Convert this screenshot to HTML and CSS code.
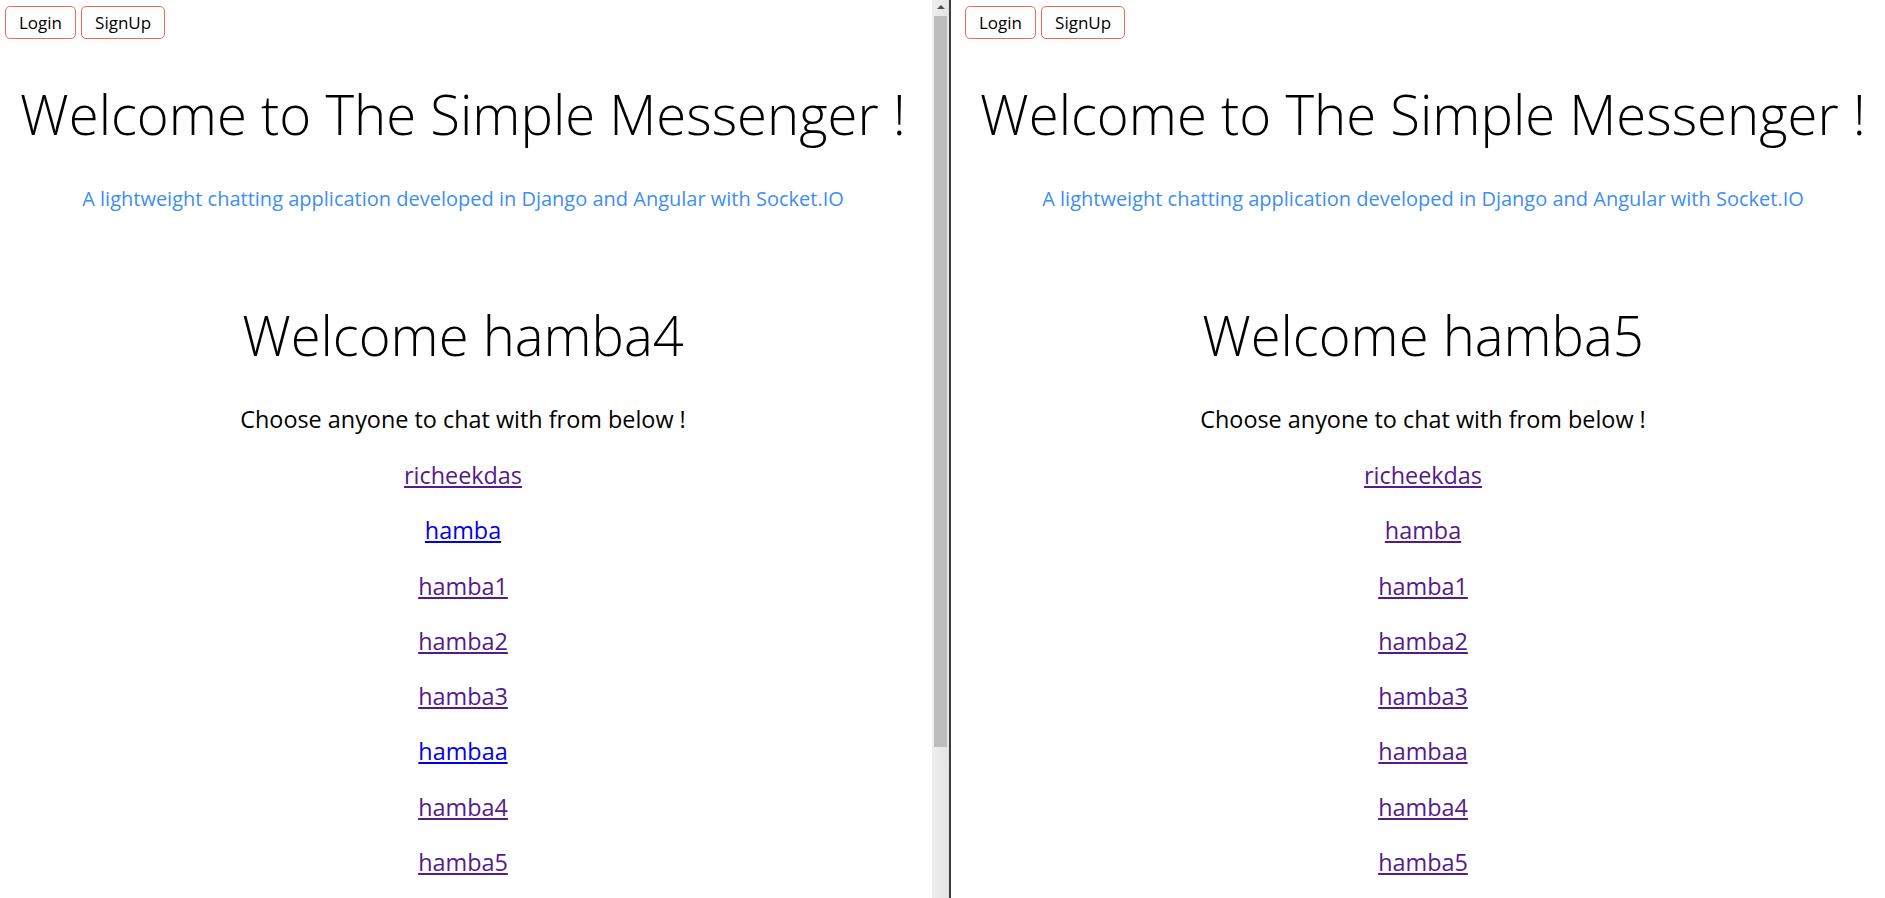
FILE: index.html
```html
<!DOCTYPE html>
<html>
<head>
<meta charset="utf-8">
<title>The Simple Messenger</title>
<link rel="stylesheet" href="styles.css">
</head>
<body>
<div class="screen">
  <div class="window window-left">
    <div class="toolbar">
      <button class="btn">Login</button>
      <button class="btn">SignUp</button>
    </div>
    <header class="hero">
      <h1 class="title">Welcome to The Simple Messenger !</h1>
      <p class="subtitle">A lightweight chatting application developed in Django and Angular with Socket.IO</p>
    </header>
    <main class="home">
      <h2 class="welcome">Welcome hamba4</h2>
      <p class="choose">Choose anyone to chat with from below !</p>
      <ul class="users">
        <li><a class="user visited" href="#">richeekdas</a></li>
        <li><a class="user fresh" href="#">hamba</a></li>
        <li><a class="user visited" href="#">hamba1</a></li>
        <li><a class="user visited" href="#">hamba2</a></li>
        <li><a class="user visited" href="#">hamba3</a></li>
        <li><a class="user fresh" href="#">hambaa</a></li>
        <li><a class="user visited" href="#">hamba4</a></li>
        <li><a class="user visited" href="#">hamba5</a></li>
      </ul>
    </main>
  </div>
  <div class="scrollbar">
    <div class="scroll-arrow"></div>
    <div class="scroll-thumb"></div>
  </div>
  <div class="divider"></div>
  <div class="frame-gap"></div>
  <div class="window window-right">
    <div class="toolbar">
      <button class="btn">Login</button>
      <button class="btn">SignUp</button>
    </div>
    <header class="hero">
      <h1 class="title">Welcome to The Simple Messenger !</h1>
      <p class="subtitle">A lightweight chatting application developed in Django and Angular with Socket.IO</p>
    </header>
    <main class="home">
      <h2 class="welcome">Welcome hamba5</h2>
      <p class="choose">Choose anyone to chat with from below !</p>
      <ul class="users">
        <li><a class="user visited" href="#">richeekdas</a></li>
        <li><a class="user visited" href="#">hamba</a></li>
        <li><a class="user visited" href="#">hamba1</a></li>
        <li><a class="user visited" href="#">hamba2</a></li>
        <li><a class="user visited" href="#">hamba3</a></li>
        <li><a class="user visited" href="#">hambaa</a></li>
        <li><a class="user visited" href="#">hamba4</a></li>
        <li><a class="user visited" href="#">hamba5</a></li>
      </ul>
    </main>
  </div>
</div>
</body>
</html>
```

FILE: styles.css
```css
html, body {
  margin: 0;
  padding: 0;
  background: #ffffff;
}

body {
  width: 1885px;
  height: 898px;
  overflow: hidden;
  font-family: "Open Sans", "Liberation Sans", sans-serif;
  color: #000;
}

.screen {
  display: flex;
  width: 1885px;
  height: 898px;
  overflow: hidden;
}

.window {
  flex: 0 0 932px;
  width: 932px;
  height: 898px;
  overflow: hidden;
  background: #fff;
}

.toolbar {
  display: flex;
  gap: 5px;
  padding: 6px 0 0 5px;
}

.btn {
  height: 33px;
  padding: 0 13px;
  border: 1px solid #f2694e;
  border-radius: 5px;
  background: #fff;
  color: #000;
  font-family: "Open Sans", "Liberation Sans", sans-serif;
  font-size: 17px;
  line-height: 31px;
}

.hero {
  text-align: center;
  padding-right: 6px;
}

.title {
  margin: 42px 0 0;
  font-size: 54.5px;
  font-weight: 300;
  line-height: 67px;
  color: #000;
}

.subtitle {
  margin: 36px 0 0;
  font-size: 20px;
  line-height: 30px;
  color: #3d8ef5;
}

.home {
  text-align: center;
  padding-right: 6px;
}

.welcome {
  margin: 88px 0 0;
  font-size: 54.4px;
  font-weight: 300;
  line-height: 67px;
}

.choose {
  margin: 33px 0 0;
  font-size: 23.4px;
  line-height: 35px;
}

.users {
  list-style: none;
  margin: 21px 0 0;
  padding: 0;
  display: flex;
  flex-direction: column;
  align-items: center;
  gap: 20.3px;
}

.users li {
  font-size: 23.4px;
  line-height: 35px;
}

.user {
  text-decoration: underline;
}

.user.visited {
  color: #551a8b;
}

.user.fresh {
  color: #0000ee;
}

.scrollbar {
  flex: 0 0 17px;
  height: 898px;
  background: linear-gradient(to right, #eeeeee, #e4e4e4);
  display: flex;
  flex-direction: column;
  align-items: center;
}

.scroll-arrow {
  width: 0;
  height: 0;
  margin-top: 5px;
  border-left: 4px solid transparent;
  border-right: 4px solid transparent;
  border-bottom: 4px solid #505050;
}

.scroll-thumb {
  margin-top: 7px;
  width: 13px;
  height: 731px;
  background: #bcbcbc;
}

.divider {
  flex: 0 0 2px;
  background: #3c3c3c;
}

.frame-gap {
  flex: 0 0 9px;
  background: #fff;
}
```
